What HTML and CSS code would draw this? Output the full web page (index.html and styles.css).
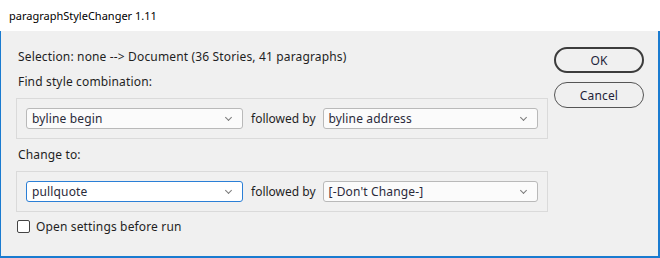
FILE: index.html
```html
<!DOCTYPE html>
<html lang="en">
<head>
    <meta charset="UTF-8">
    <title>paragraphStyleChanger 1.11</title>
    <link rel="stylesheet" href="styles.css">
</head>
<body>

<div class="window">
    <div class="titlebar">paragraphStyleChanger 1.11</div>

    <div class="dialog">
        <div class="main">
            <div class="label">Selection: none --&gt; Document (36 Stories, 41 paragraphs)</div>

            <div class="label">Find style combination:</div>
            <div class="panel">
                <div class="dropdown wide">byline begin</div>
                <span class="joiner">followed by</span>
                <div class="dropdown">byline address</div>
            </div>

            <div class="label">Change to:</div>
            <div class="panel">
                <div class="dropdown wide focused">pullquote</div>
                <span class="joiner">followed by</span>
                <div class="dropdown">[-Don't Change-]</div>
            </div>

            <label class="check">
                <span class="box"></span>
                Open settings before run
            </label>
        </div>

        <div class="buttons">
            <button type="button" class="default">OK</button>
            <button type="button">Cancel</button>
        </div>
    </div>
</div>

</body>
</html>
```

FILE: styles.css
```css
body {
    margin: 0;
    padding: 0;
    background: #ffffff;
    font-family: 'Noto Sans', 'Open Sans', sans-serif;
    font-size: 12px;
    letter-spacing: 0.15px;
    color: #1f1f1f;
}

.window {
    width: 660px;
    height: 258px;
    box-sizing: border-box;
    display: flex;
    flex-direction: column;
}

.titlebar {
    height: 31px;
    line-height: 31px;
    padding-left: 9px;
    background: #ffffff;
    color: #000000;
    font-size: 11px;
    letter-spacing: 0;
}

.dialog {
    flex: 1;
    display: flex;
    background: #f0f0f0;
    border-left: 1px solid #1a7bd0;
    border-right: 2px solid #1a7bd0;
    border-bottom: 2px solid #1a7bd0;
}

.main {
    width: 532px;
    margin-left: 15px;
    padding-top: 17px;
    display: flex;
    flex-direction: column;
    gap: 7px;
}

.label {
    height: 18px;
    line-height: 18px;
    padding-left: 2px;
}

.panel {
    display: flex;
    align-items: center;
    padding: 9px;
    border: 1px solid #dadada;
}

.dropdown {
    position: relative;
    flex: 1;
    height: 21px;
    line-height: 19px;
    box-sizing: border-box;
    padding-left: 5px;
    background: #fbfbfb;
    border: 1px solid #b9b9b9;
    border-radius: 3px;
    color: #2a2a3a;
}

.dropdown.wide {
    flex: none;
    width: 217px;
}

.dropdown.focused {
    border-color: #2b7fd6;
    background: #ffffff;
}

.dropdown::after {
    content: "";
    position: absolute;
    right: 11px;
    top: 6px;
    width: 4px;
    height: 4px;
    border-right: 1px solid #7a7a7a;
    border-bottom: 1px solid #7a7a7a;
    transform: rotate(45deg);
}

.joiner {
    margin: 0 7px 0 8px;
    white-space: nowrap;
    letter-spacing: 0;
}

.check {
    display: flex;
    align-items: center;
    gap: 6px;
    height: 18px;
    margin-top: -2px;
    padding-left: 1px;
}

.check .box {
    width: 11px;
    height: 11px;
    border: 1px solid #444444;
    border-radius: 2px;
    background: #ffffff;
}

.buttons {
    margin-left: 6px;
    padding-top: 16px;
    display: flex;
    flex-direction: column;
    gap: 9px;
}

button {
    width: 90px;
    height: 26px;
    padding: 0;
    border: 1px solid #555555;
    border-radius: 13px;
    background: #f0f0f0;
    font-family: 'Noto Sans', 'Open Sans', sans-serif;
    font-size: 12px;
    letter-spacing: 0.15px;
    color: #1f1f3a;
}

button.default {
    border: 2px solid #3c3c3c;
}
```
